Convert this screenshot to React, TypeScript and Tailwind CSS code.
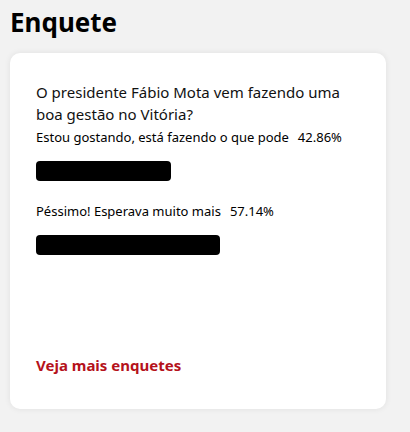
import React from "react"

const options = [
	{ label: "Estou gostando, está fazendo o que pode", pct: "42.86%", bar: "w-[135px]" },
	{ label: "Péssimo! Esperava muito mais", pct: "57.14%", bar: "w-[184px]" }
]

export default function App() {
	return (
		<div className="min-h-screen w-[410px] h-[432px] bg-[#f2f2f2] font-['Noto_Sans',sans-serif] text-black overflow-hidden">
			<div className="pl-[10px] pr-[24px] pt-[2px]">
				<h1 className="text-[26px] font-bold leading-[40px]">Enquete</h1>
				<div className="mt-[11px] h-[356px] bg-white rounded-[10px] shadow-[0_0_6px_rgba(0,0,0,0.08)] px-[26px] pt-[28px] flex flex-col">
					<p className="text-[15px] leading-[22px] text-[#111]">
						O presidente Fábio Mota vem fazendo uma boa gestão no Vitória?
					</p>
					{options.map((o, i) => (
						<div key={i} className={i === 0 ? "mt-[2px]" : "mt-[20px]"}>
							<div className="text-[13px] leading-[20px] flex gap-[9px]">
								<span>{o.label}</span>
								<span>{o.pct}</span>
							</div>
							<div className={"mt-[14px] h-[20px] rounded-[4px] bg-black " + o.bar}></div>
						</div>
					))}
					<a href="#" className="mt-auto mb-[33px] text-[15px] font-bold text-[#b5121b]">
						Veja mais enquetes
					</a>
				</div>
			</div>
		</div>
	)
}
